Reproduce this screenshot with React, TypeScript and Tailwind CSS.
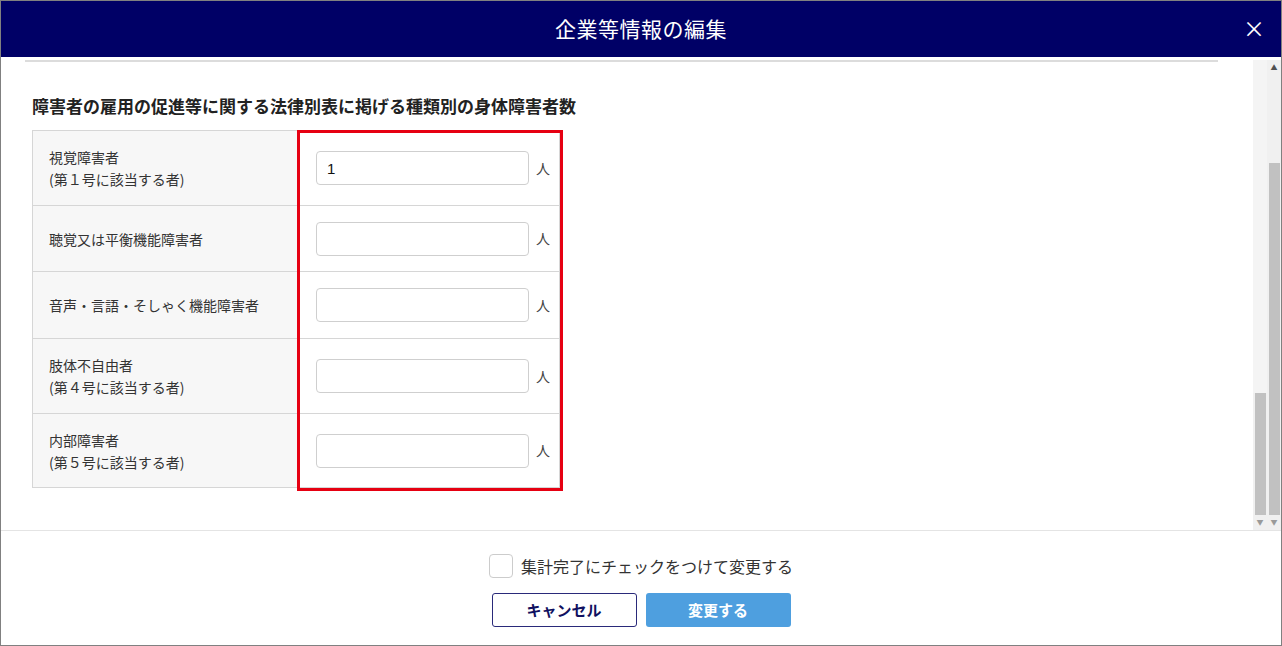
import React from 'react';

const rows = [
  { lines: ['視覚障害者', '(第１号に該当する者)'], h: 'h-[75px]', value: '1' },
  { lines: ['聴覚又は平衡機能障害者'], h: 'h-[66px]', value: '' },
  { lines: ['音声・言語・そしゃく機能障害者'], h: 'h-[67px]', value: '' },
  { lines: ['肢体不自由者', '(第４号に該当する者)'], h: 'h-[75px]', value: '' },
  { lines: ['内部障害者', '(第５号に該当する者)'], h: 'h-[74px]', value: '' },
];

function Scrollbars() {
  return (
    <div className="w-[28px] mt-[3px] bg-[#f0f0f0] flex shrink-0">
      {/* inner scrollbar */}
      <div className="w-[14px] flex flex-col items-center">
        <div className="flex-1 w-full bg-[#f4f4f4]" />
        <div className="w-[11px] h-[122px] bg-[#c1c1c1]" />
        <div className="h-[15px] flex items-center justify-center text-[7px] text-[#9a9a9a] leading-none">▼</div>
      </div>
      {/* outer scrollbar */}
      <div className="w-[14px] flex flex-col items-center">
        <div className="h-[15px] flex items-center justify-center text-[7px] text-[#505050] leading-none">▲</div>
        <div className="h-[88px]" />
        <div className="w-[11px] flex-1 bg-[#c1c1c1]" />
        <div className="h-[15px] flex items-center justify-center text-[7px] text-[#9a9a9a] leading-none">▼</div>
      </div>
    </div>
  );
}

export default function App() {
  return (
    <div
      className="w-[1282px] h-[646px] border border-[#808080] bg-white flex flex-col overflow-hidden"
      style={{ fontFamily: '"Noto Sans CJK JP", "Noto Sans", sans-serif' }}
    >
      {/* Header */}
      <header className="h-[56px] bg-[#000066] flex items-center justify-center relative shrink-0">
        <h1 className="text-white text-[21px] tracking-[0.5px]">企業等情報の編集</h1>
        <button className="absolute right-[16px] top-[15px] text-white text-[22px] leading-none">×</button>
      </header>

      {/* Scroll body */}
      <div className="flex-1 flex min-h-0">
        <div className="flex-1 min-w-0 pl-[24px] pt-[3px]">
          <div className="w-[1193px] h-[2px] bg-[#dcdcdc]" />
          <div className="pl-[7px]">
            <h2 className="mt-[32px] text-[17px] font-bold text-[#222] leading-[24px]">
              障害者の雇用の促進等に関する法律別表に掲げる種類別の身体障害者数
            </h2>
            <div className="relative mt-[12px] w-[528px]">
              <div className="border-t border-l border-[#d6d6d6]">
                {rows.map((r, i) => (
                  <div key={i} className={`flex ${r.h} border-b border-[#d6d6d6]`}>
                    <div className="w-[265px] bg-[#f7f7f7] border-r border-[#d6d6d6] pl-[16px] flex flex-col justify-center text-[14px] leading-[22px] text-[#333]">
                      {r.lines.map((l, j) => (
                        <div key={j}>{l}</div>
                      ))}
                    </div>
                    <div className="flex-1 border-r border-[#d6d6d6] flex items-center pl-[18px]">
                      <input
                        defaultValue={r.value}
                        className="w-[213px] h-[34px] border border-[#cfcfcf] rounded-[4px] px-[10px] text-[15px] font-medium text-[#111] outline-none"
                        style={{ fontFamily: '"Liberation Sans", Arial, sans-serif' }}
                      />
                      <span className="ml-[7px] text-[14px] text-[#444]">人</span>
                    </div>
                  </div>
                ))}
              </div>
              {/* annotation highlight */}
              <div className="absolute left-[265px] top-0 w-[266px] h-[361px] border-[3px] border-[#e60012] pointer-events-none" />
            </div>
          </div>
        </div>
        <Scrollbars />
      </div>

      {/* Footer */}
      <footer className="h-[115px] shrink-0 border-t border-[#e4e4e4] flex flex-col items-center">
        <label className="mt-[23px] flex items-center gap-[8px]">
          <span className="w-[24px] h-[24px] border border-[#cccccc] rounded-[4px] bg-white" />
          <span className="text-[16px] text-[#333] leading-[24px]">集計完了にチェックをつけて変更する</span>
        </label>
        <div className="mt-[15px] flex gap-[9px]">
          <button className="w-[145px] h-[34px] border border-[#2a2a7a] rounded-[3px] bg-white text-[#101060] text-[15px] font-bold">
            キャンセル
          </button>
          <button className="w-[145px] h-[34px] rounded-[3px] bg-[#4e9fdf] text-white text-[15px] font-bold">
            変更する
          </button>
        </div>
      </footer>
    </div>
  );
}
